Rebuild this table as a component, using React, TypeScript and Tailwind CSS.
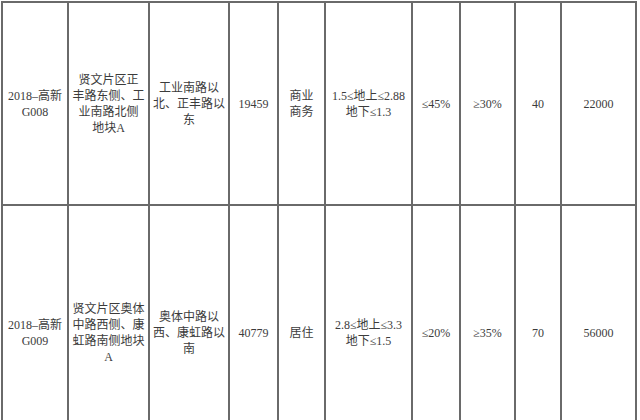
import React from "react";

// each cell holds its lines, broken where the picture breaks them
const rows: string[][][] = [
  [
    ["2018–高新", "G008"],
    ["贤文片区正", "丰路东侧、工", "业南路北侧", "地块A"],
    ["工业南路以", "北、正丰路以", "东"],
    ["19459"],
    ["商业", "商务"],
    ["1.5≤地上≤2.88", "地下≤1.3"],
    ["≤45%"],
    ["≥30%"],
    ["40"],
    ["22000"],
  ],
  [
    ["2018–高新", "G009"],
    ["贤文片区奥体", "中路西侧、康", "虹路南侧地块", "A"],
    ["奥体中路以", "西、康虹路以", "南"],
    ["40779"],
    ["居住"],
    ["2.8≤地上≤3.3", "地下≤1.5"],
    ["≤20%"],
    ["≥35%"],
    ["70"],
    ["56000"],
  ],
];

export default function App() {
  return (
    <div className="w-[640px] h-[420px] overflow-hidden bg-white">
      <div
        className="ml-px mt-px w-[636px] grid grid-cols-[64px_79px_78px_47px_45px_85px_46px_53px_44px_73px] grid-rows-[201px_254px] gap-[2px] p-[2px] bg-[#6a6a6a] text-[12px] leading-[16px] text-[#3c3c3c]"
        style={{ fontFamily: '"Liberation Serif", "Noto Sans CJK SC", serif' }}
      >
        {rows.map((row, r) =>
          row.map((lines, c) => (
            <div
              key={`${r}-${c}`}
              className="bg-white flex flex-col items-center justify-center text-center whitespace-nowrap"
            >
              {lines.map((line, i) => (
                <span key={i}>{line}</span>
              ))}
            </div>
          ))
        )}
      </div>
    </div>
  );
}
